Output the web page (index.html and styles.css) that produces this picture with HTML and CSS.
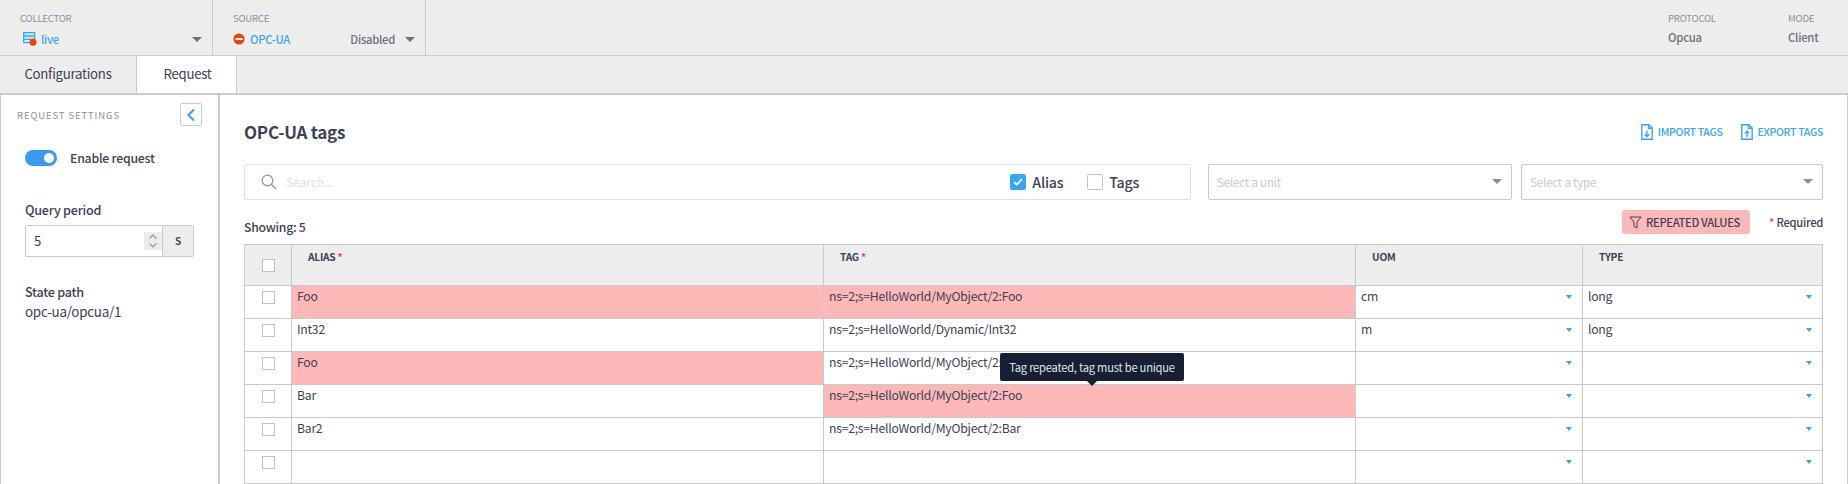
FILE: index.html
```html
<!DOCTYPE html>
<html lang="en">

<head>
    <meta charset="UTF-8">
    <title>OPC-UA tags</title>
    <link rel="stylesheet" href="styles.css">
</head>

<body>
    <header class="topbar">
        <div class="top-cell collector">
            <span class="top-label">COLLECTOR</span>
            <div class="top-value">
                <svg class="ico-collector" width="14" height="14" viewBox="0 0 14 14">
                    <path d="M.7.7h11v10H.7z M.7 4h11 M.7 7.4h11" fill="#cfe8fb" stroke="#3aa5ef" stroke-width="1.3"/>
                    <circle cx="10" cy="10.3" r="3.5" fill="#f0410f"/>
                </svg>
                <span class="link-text">live</span>
                <span class="caret"></span>
            </div>
        </div>
        <div class="top-cell source">
            <span class="top-label">SOURCE</span>
            <div class="top-value">
                <svg class="ico-source" width="12" height="12" viewBox="0 0 12 12">
                    <circle cx="6" cy="6" r="5.6" fill="#f0410f"/>
                    <rect x="2.5" y="5" width="7" height="2" fill="#fff"/>
                </svg>
                <span class="link-text">OPC-UA</span>
                <span class="status">Disabled</span>
                <span class="caret"></span>
            </div>
        </div>
        <div class="top-info protocol">
            <span class="top-label">PROTOCOL</span>
            <span class="info-value">Opcua</span>
        </div>
        <div class="top-info mode">
            <span class="top-label">MODE</span>
            <span class="info-value">Client</span>
        </div>
    </header>

    <nav class="tabs">
        <div class="tab tab-config">Configurations</div>
        <div class="tab tab-active">Request</div>
    </nav>

    <div class="content">
        <aside class="sidebar">
            <div class="side-head">
                <span class="side-title">REQUEST SETTINGS</span>
                <button class="collapse-btn">
                    <svg width="10" height="14" viewBox="0 0 10 14">
                        <path d="M8 1.5 2.5 7 8 12.5" fill="none" stroke="#3aa5ef" stroke-width="2.2"/>
                    </svg>
                </button>
            </div>
            <div class="side-body">
                <div class="enable-row">
                    <span class="toggle"><span class="knob"></span></span>
                    <span class="enable-text">Enable request</span>
                </div>
                <label class="field-label">Query period</label>
                <div class="period">
                    <div class="period-input">
                        <span>5</span>
                        <span class="spinner">
                            <svg width="10" height="16" viewBox="0 0 10 16">
                                <path d="M1.5 5.5 5 2l3.5 3.5M1.5 10.5 5 14l3.5-3.5" fill="none" stroke="#8d93a3" stroke-width="1.1"/>
                            </svg>
                        </span>
                    </div>
                    <div class="period-unit">s</div>
                </div>
                <div class="field-label state-label">State path</div>
                <div class="state-value">opc-ua/opcua/1</div>
            </div>
        </aside>

        <main class="main">
            <div class="title-row">
                <h1>OPC-UA tags</h1>
                <div class="actions">
                    <a class="action">
                        <svg width="12" height="16" viewBox="0 0 12 16">
                            <path d="M.8.8h7L11.2 4v11.2H.8z M7.5.8V4.2h3.7" fill="none" stroke="#3aa5ef" stroke-width="1.4"/>
                            <path d="M6 6.5v6M3.8 10.2 6 12.6l2.2-2.4" fill="none" stroke="#3aa5ef" stroke-width="1.4"/>
                        </svg>
                        IMPORT TAGS
                    </a>
                    <a class="action">
                        <svg width="12" height="16" viewBox="0 0 12 16">
                            <path d="M.8.8h7L11.2 4v11.2H.8z M7.5.8V4.2h3.7" fill="none" stroke="#3aa5ef" stroke-width="1.4"/>
                            <path d="M6 13V7M3.8 9.4 6 7l2.2 2.4" fill="none" stroke="#3aa5ef" stroke-width="1.4"/>
                        </svg>
                        EXPORT TAGS
                    </a>
                </div>
            </div>

            <div class="filter-row">
                <div class="search">
                    <svg width="16" height="16" viewBox="0 0 16 16">
                        <circle cx="6.5" cy="6.5" r="5.3" fill="none" stroke="#8d93a3" stroke-width="1.2"/>
                        <path d="M10.5 10.5 15 15" stroke="#8d93a3" stroke-width="1.3"/>
                    </svg>
                    <span class="search-text">Search...</span>
                    <span class="check-box checked">
                        <svg width="10" height="8" viewBox="0 0 10 8">
                            <path d="M1 4l2.8 2.6L9 1.2" fill="none" stroke="#fff" stroke-width="1.8"/>
                        </svg>
                    </span>
                    <span class="check-text alias-text">Alias</span>
                    <span class="check-box"></span>
                    <span class="check-text tags-text">Tags</span>
                </div>
                <div class="select select-unit">Select a unit<span class="select-caret"></span></div>
                <div class="select select-type">Select a type<span class="select-caret"></span></div>
            </div>

            <div class="meta-row">
                <span class="showing">Showing: 5</span>
                <button class="repeated">
                    <svg width="13" height="13" viewBox="0 0 13 13">
                        <path d="M.8 1h11.4L8 6.2V12L5 10.4V6.2z" fill="none" stroke="#3c4257" stroke-width="1"/>
                    </svg>
                    REPEATED VALUES
                </button>
                <span class="required"><em>*</em> Required</span>
            </div>

            <table class="tags">
                <colgroup>
                    <col class="col-check">
                    <col class="col-wide">
                    <col class="col-wide">
                    <col class="col-uom">
                    <col>
                </colgroup>
                <thead>
                    <tr>
                        <th class="cell-check"><span class="box"></span></th>
                        <th>ALIAS <em>*</em></th>
                        <th>TAG <em>*</em></th>
                        <th>UOM</th>
                        <th>TYPE</th>
                    </tr>
                </thead>
                <tbody>
                    <tr>
                        <td class="cell-check"><span class="box"></span></td>
                        <td class="repeat">Foo</td>
                        <td class="repeat">ns=2;s=HelloWorld/MyObject/2:Foo</td>
                        <td class="drop">cm</td>
                        <td class="drop">long</td>
                    </tr>
                    <tr>
                        <td class="cell-check"><span class="box"></span></td>
                        <td>Int32</td>
                        <td>ns=2;s=HelloWorld/Dynamic/Int32</td>
                        <td class="drop">m</td>
                        <td class="drop">long</td>
                    </tr>
                    <tr>
                        <td class="cell-check"><span class="box"></span></td>
                        <td class="repeat">Foo</td>
                        <td>ns=2;s=HelloWorld/MyObject/2:Foo</td>
                        <td class="drop"></td>
                        <td class="drop"></td>
                    </tr>
                    <tr>
                        <td class="cell-check"><span class="box"></span></td>
                        <td>Bar</td>
                        <td class="repeat tip-cell">ns=2;s=HelloWorld/MyObject/2:Foo
                            <div class="tooltip">Tag repeated, tag must be unique</div>
                        </td>
                        <td class="drop"></td>
                        <td class="drop"></td>
                    </tr>
                    <tr>
                        <td class="cell-check"><span class="box"></span></td>
                        <td>Bar2</td>
                        <td>ns=2;s=HelloWorld/MyObject/2:Bar</td>
                        <td class="drop"></td>
                        <td class="drop"></td>
                    </tr>
                    <tr>
                        <td class="cell-check"><span class="box"></span></td>
                        <td></td>
                        <td></td>
                        <td class="drop"></td>
                        <td class="drop"></td>
                    </tr>
                </tbody>
            </table>
        </main>
    </div>
</body>

</html>
```

FILE: styles.css
```css
* {
    margin: 0;
    padding: 0;
    box-sizing: border-box;
}

html,
body {
    height: 484px;
    overflow: hidden;
}

body {
    font-family: "Noto Sans CJK JP", "Open Sans", sans-serif;
    font-size: 12.2px;
    line-height: 16px;
    letter-spacing: -0.02em;
    color: #3c4257;
    background-color: #ededed;
}

/* top bar */
.topbar {
    display: flex;
    height: 56px;
    border-bottom: 1px solid #c9cbd3;
}

.top-cell {
    height: 55px;
    padding-top: 11px;
    border-right: 1px solid #c9cbd3;
}

.collector {
    width: 213px;
    padding-left: 20px;
    padding-right: 10px;
}

.source {
    width: 213px;
    padding-left: 20px;
    padding-right: 10px;
}

.top-label {
    display: block;
    font-size: 9.6px;
    line-height: 14px;
    color: #8b8f9c;
}

.top-value {
    display: flex;
    align-items: center;
    height: 16px;
    margin-top: 6px;
    font-weight: 500;
    font-size: 11.2px;
}

.ico-collector {
    margin: 0 4px 0 3px;
}

.ico-source {
    margin: 0 5px 0 0;
}

.link-text {
    color: #3aa5ef;
}

.status {
    margin-left: auto;
    margin-right: 10px;
    color: #6b7080;
}

.caret {
    width: 0;
    height: 0;
    border-left: 5px solid transparent;
    border-right: 5px solid transparent;
    border-top: 5px solid #6b7080;
}

.collector .caret {
    margin-left: auto;
}

.top-info {
    padding-top: 11px;
}

.protocol {
    margin-left: auto;
    width: 120px;
}

.mode {
    width: 35px;
    margin-right: 25px;
}

.info-value {
    display: block;
    margin-top: 4px;
    font-size: 11.3px;
    font-weight: 500;
    color: #6b7080;
}

/* tabs */
.tabs {
    display: flex;
    height: 39px;
    border-bottom: 2px solid #c9cbd3;
}

.tab {
    height: 37px;
    font-size: 13.2px;
    line-height: 36px;
    text-align: center;
    border-right: 1px solid #c9cbd3;
}

.tab-config {
    width: 137px;
}

.tab-active {
    width: 100px;
    padding-left: 2px;
    background-color: #fff;
}

/* content */
.content {
    display: flex;
    height: 389px;
    background-color: #fff;
    border-left: 1px solid #c9cbd3;
    border-right: 1px solid #c9cbd3;
}

.sidebar {
    flex: none;
    width: 219px;
    border-right: 2px solid #c9cbd3;
}

.side-head {
    display: flex;
    justify-content: space-between;
    align-items: center;
    height: 23px;
    margin-top: 8px;
    padding: 0 16px 0 16px;
}

.side-title {
    font-size: 9.5px;
    letter-spacing: 0.88px;
    color: #8b8f9c;
}

.collapse-btn {
    display: flex;
    align-items: center;
    justify-content: center;
    width: 22px;
    height: 23px;
    background-color: #fff;
    border: 1px solid #c9cbd3;
    border-radius: 2px;
}

.side-body {
    padding: 0 24px;
}

.enable-row {
    display: flex;
    align-items: center;
    margin-top: 24px;
}

.toggle {
    display: flex;
    align-items: center;
    justify-content: flex-end;
    width: 32px;
    height: 16px;
    padding-right: 3px;
    background-color: #3a9bea;
    border-radius: 8px;
}

.knob {
    width: 10px;
    height: 10px;
    background-color: #fff;
    border-radius: 50%;
}

.enable-text {
    margin-left: 13px;
    font-weight: 500;
    font-size: 12.3px;
}

.field-label {
    display: block;
    margin-top: 36px;
    font-size: 12.6px;
    font-weight: 500;
}

.period {
    display: flex;
    height: 32px;
    width: 169px;
    margin-top: 7px;
}

.period-input {
    display: flex;
    align-items: center;
    justify-content: space-between;
    width: 138px;
    padding-left: 8px;
    font-size: 13px;
    border: 1px solid #c9cbd3;
    border-radius: 2px 0 0 2px;
}

.spinner {
    display: flex;
    align-items: center;
    justify-content: center;
    width: 18px;
    height: 18px;
    background-color: #ededed;
}

.period-unit {
    width: 31px;
    line-height: 28px;
    text-align: center;
    font-size: 13px;
    font-weight: 500;
    background-color: #ededed;
    border: 1px solid #c9cbd3;
    border-left: none;
    border-radius: 0 2px 2px 0;
}

.state-label {
    margin-top: 27px;
}

.state-value {
    margin-top: 3px;
    font-size: 13.4px;
}

/* main */
.main {
    flex: 1;
    padding: 0 24px 0 24px;
}

.title-row {
    display: flex;
    justify-content: space-between;
    align-items: center;
    height: 24px;
    margin-top: 25px;
}

h1 {
    font-size: 17px;
    font-weight: 700;
}

.actions {
    display: flex;
    gap: 18px;
}

.action {
    display: flex;
    align-items: center;
    gap: 5px;
    font-size: 10.5px;
    letter-spacing: -0.03em;
    font-weight: 500;
    color: #3aa5ef;
}

.filter-row {
    display: flex;
    height: 36px;
    margin-top: 20px;
}

.search {
    display: flex;
    align-items: center;
    width: 947px;
    padding-left: 16px;
    border: 1px solid #e0e1e5;
    border-radius: 2px;
}

.search-text {
    flex: 1;
    margin-left: 9px;
    font-size: 12.4px;
    color: #dfe1e8;
}

.check-box {
    display: flex;
    align-items: center;
    justify-content: center;
    width: 16px;
    height: 16px;
    border: 1px solid #c0c3cf;
    border-radius: 2px;
}

.checked {
    background-color: #3aa5ef;
    border-color: #3aa5ef;
}

.check-text {
    margin-left: 6px;
    font-size: 14.2px;
    font-weight: 500;
}

.alias-text {
    margin-right: 24px;
}

.tags-text {
    margin-right: 51px;
}

.select {
    display: flex;
    justify-content: space-between;
    height: 36px;
    padding: 9px 9px 9px 8px;
    font-size: 11.7px;
    color: #c9cbd3;
    border: 1px solid #c9cbd3;
    border-radius: 2px;
}

.select-unit {
    width: 304px;
    margin-left: 17px;
}

.select-type {
    width: 302px;
    margin-left: 9px;
}

.select-caret {
    width: 0;
    height: 0;
    margin-top: 5px;
    border-left: 5px solid transparent;
    border-right: 5px solid transparent;
    border-top: 5px solid #8b8f9c;
}

.meta-row {
    display: flex;
    align-items: center;
    height: 24px;
    margin-top: 10px;
}

.showing {
    margin-right: auto;
    margin-top: 10px;
    font-size: 12.2px;
    font-weight: 500;
}

.repeated {
    display: flex;
    align-items: center;
    gap: 4px;
    height: 24px;
    width: 128px;
    padding-left: 7px;
    font-family: inherit;
    font-size: 11.2px;
    letter-spacing: -0.03em;
    white-space: nowrap;
    font-weight: 500;
    color: #3c4257;
    background-color: #ffb8b8;
    border: none;
    border-radius: 3px;
}

.required {
    width: 54px;
    margin-left: 19px;
    font-size: 11.2px;
    font-weight: 500;
    white-space: nowrap;
}

em {
    font-style: normal;
    color: #e5484d;
}

/* table */
.tags {
    width: 1579px;
    margin-top: 10px;
    table-layout: fixed;
    border-collapse: collapse;
    border: 1px solid #c9c9c9;
}

.col-check {
    width: 47px;
}

.col-wide {
    width: 532px;
}

.col-uom {
    width: 227px;
}

th,
td {
    height: 33px;
    padding: 2px 5px 0;
    text-align: left;
    vertical-align: top;
    border: 1px solid #c9c9c9;
    font-weight: 400;
}

th {
    height: 41px;
    padding: 4px 16px 0;
    font-size: 10.2px;
    font-weight: 700;
    background-color: #ededed;
}

.cell-check {
    padding: 5px 0 0 17px;
}

th.cell-check {
    padding-top: 14px;
}

.box {
    display: block;
    width: 13px;
    height: 13px;
    background-color: #fff;
    border: 1px solid #bfc2ce;
}

.repeat {
    background-color: #ffb8b8;
}

.drop {
    position: relative;
}

.drop::after {
    content: "";
    position: absolute;
    top: 9px;
    right: 10px;
    width: 0;
    height: 0;
    border-left: 3px solid transparent;
    border-right: 3px solid transparent;
    border-top: 4px solid #3aa5ef;
}

.tip-cell {
    position: relative;
}

.tooltip {
    position: absolute;
    left: 176px;
    top: -32px;
    width: 184px;
    height: 28px;
    font-size: 11.2px;
    line-height: 28px;
    white-space: nowrap;
    text-align: center;
    color: #dfe3ea;
    background-color: #172033;
    border-radius: 2px;
}

.tooltip::after {
    content: "";
    position: absolute;
    left: 87px;
    bottom: -5px;
    width: 0;
    height: 0;
    border-left: 5px solid transparent;
    border-right: 5px solid transparent;
    border-top: 5px solid #172033;
}
```
